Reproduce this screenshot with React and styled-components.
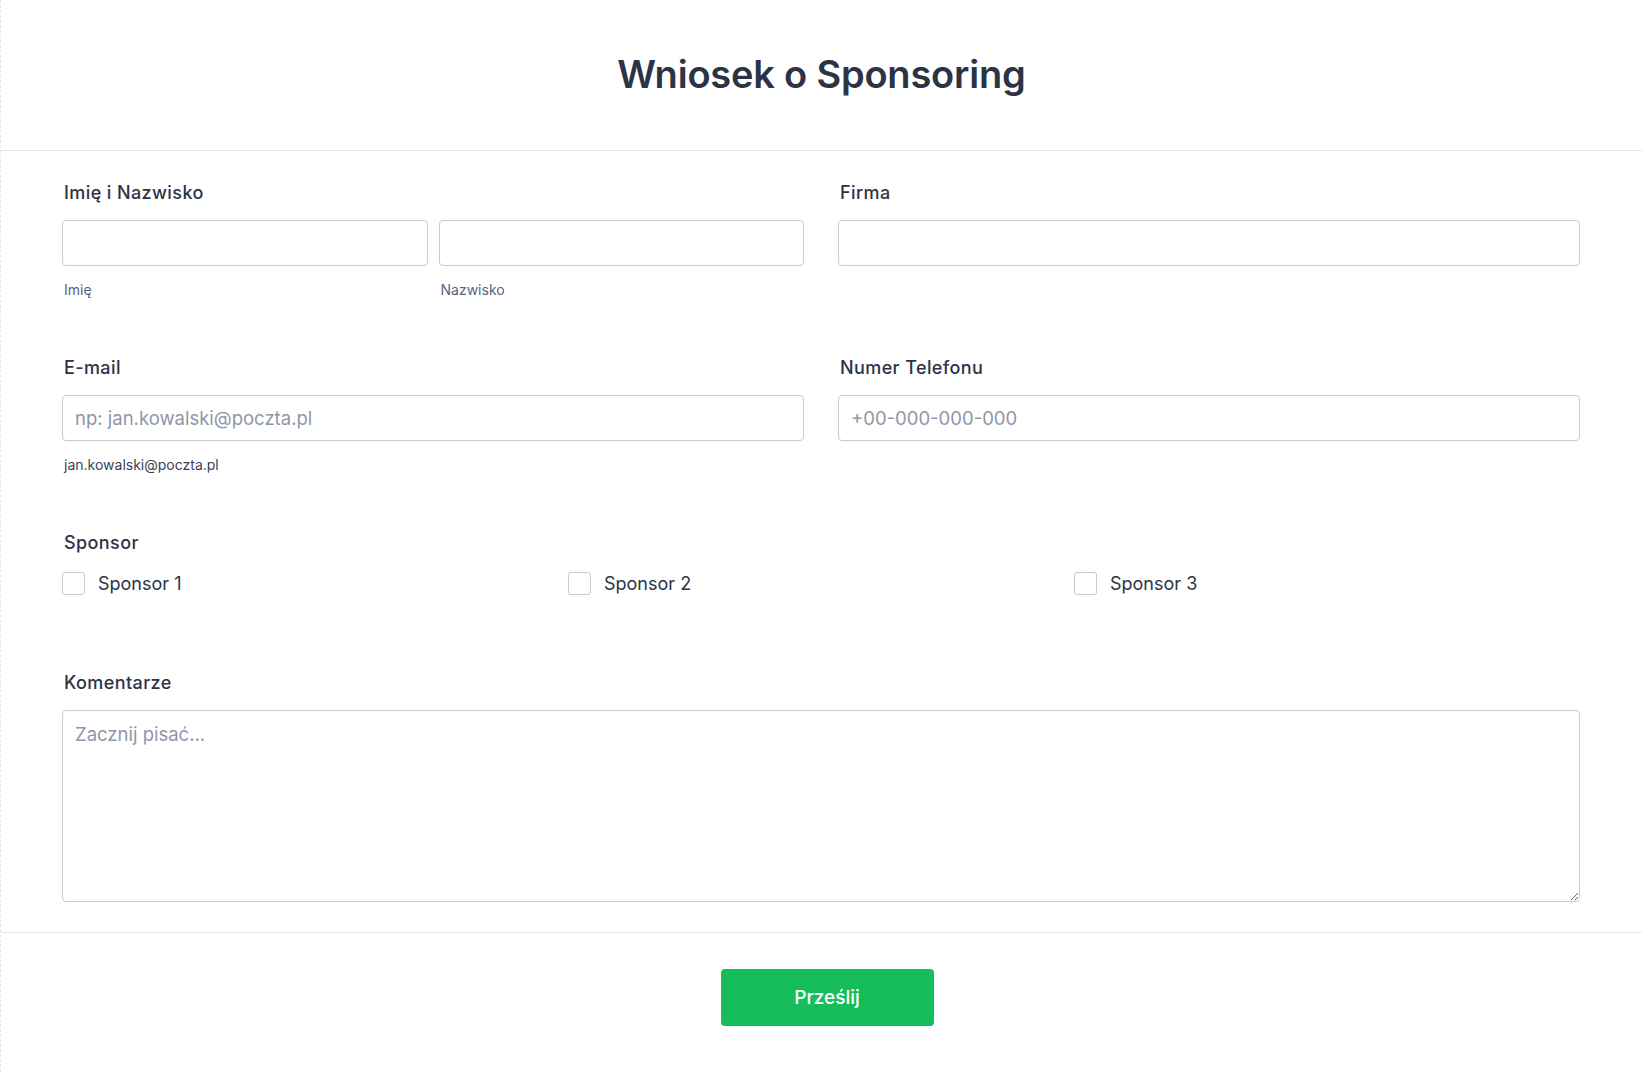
import styled, { createGlobalStyle } from "styled-components";

const GlobalStyle = createGlobalStyle`
    * { box-sizing: border-box; }
    body {
        margin: 0;
        background: #ffffff;
        font-family: Inter, "Noto Sans", sans-serif;
        color: #2c3345;
    }
`

export default function App() {
    const sponsors = ['Sponsor 1', 'Sponsor 2', 'Sponsor 3']
    return (
        <>
            <GlobalStyle />
            <Page>
                <Header>
                    <h1>Wniosek o Sponsoring</h1>
                </Header>
                <Form>
                    <Row>
                        <Field>
                            <Label>Imię i Nazwisko</Label>
                            <Pair>
                                <div>
                                    <Input type="text" />
                                    <Sub>Imię</Sub>
                                </div>
                                <div>
                                    <Input type="text" />
                                    <Sub>Nazwisko</Sub>
                                </div>
                            </Pair>
                        </Field>
                        <Field>
                            <Label>Firma</Label>
                            <Input type="text" />
                        </Field>
                    </Row>
                    <Row>
                        <Field>
                            <Label>E-mail</Label>
                            <Input type="email" placeholder="np: jan.kowalski@poczta.pl" />
                            <Sub dark>jan.kowalski@poczta.pl</Sub>
                        </Field>
                        <Field>
                            <Label>Numer Telefonu</Label>
                            <Input type="tel" placeholder="+00-000-000-000" />
                        </Field>
                    </Row>
                    <Section>
                        <Label>Sponsor</Label>
                        <Checks>
                            {sponsors.map((s) => (
                                <Check key={s}>
                                    <Box type="checkbox" />
                                    <span>{s}</span>
                                </Check>
                            ))}
                        </Checks>
                    </Section>
                    <Section last>
                        <Label>Komentarze</Label>
                        <TextArea placeholder="Zacznij pisać..." />
                    </Section>
                </Form>
                <Footer>
                    <Submit type="button">Prześlij</Submit>
                </Footer>
            </Page>
        </>
    )
}

const Page = styled.div`
    min-height: 1072px;
    border-left: 1px dashed #e4e6eb;
`

const Header = styled.header`
    height: 151px;
    display: flex;
    align-items: center;
    justify-content: center;
    border-bottom: 1px solid #e3e5ea;
    h1 {
        margin: 0;
        padding-bottom: 3px;
        font-size: 38px;
        font-weight: 600;
        color: #2c3345;
        letter-spacing: -0.2px;
    }
`

const Form = styled.div`
    padding: 32px 62px 30px 61px;
`

const Row = styled.div`
    display: grid;
    grid-template-columns: 1fr 1fr;
    column-gap: 34px;
    margin-bottom: 60px;
`

const Field = styled.div`
    display: flex;
    flex-direction: column;
`

const Section = styled.div`
    margin-bottom: ${(props) => (props.last ? '0' : '78px')};
`

const Label = styled.div`
    font-size: 18px;
    line-height: 20px;
    font-weight: 500;
    letter-spacing: 0.4px;
    color: #2c3345;
    padding-left: 2px;
    margin-bottom: 17px;
`

const Pair = styled.div`
    display: grid;
    grid-template-columns: 1fr 1fr;
    column-gap: 11px;
`

const Input = styled.input`
    display: block;
    width: 100%;
    height: 46px;
    border: 1px solid #c3cad8;
    border-radius: 4px;
    padding: 0 12px;
    font-family: Inter, "Noto Sans", sans-serif;
    font-size: 18.5px;
    color: #2c3345;
    background: #fff;
    outline: none;
    &::placeholder {
        color: #8f96a8;
    }
`

const Sub = styled.div`
    font-size: 14px;
    line-height: 16px;
    margin-top: 16px;
    padding-left: 2px;
    color: ${(props) => (props.dark ? '#39435a' : '#57647e')};
`

const Checks = styled.div`
    display: grid;
    grid-template-columns: repeat(3, 1fr);
    padding-top: 2px;
`

const Check = styled.label`
    display: flex;
    align-items: center;
    gap: 13px;
    font-size: 18px;
    color: #2c3345;
`

const Box = styled.input`
    appearance: none;
    margin: 0;
    width: 23px;
    height: 23px;
    border: 1px solid #c3cad8;
    border-radius: 3px;
    background: #fff;
`

const TextArea = styled.textarea`
    display: block;
    width: 100%;
    height: 192px;
    border: 1px solid #c3cad8;
    border-radius: 4px;
    padding: 12px;
    font-family: Inter, "Noto Sans", sans-serif;
    font-size: 18.5px;
    color: #2c3345;
    resize: vertical;
    outline: none;
    &::placeholder {
        color: #8f96a8;
    }
`

const Footer = styled.div`
    border-top: 1px solid #e3e5ea;
    display: flex;
    justify-content: center;
    padding: 36px 0 46px 11px;
`

const Submit = styled.button`
    width: 213px;
    height: 57px;
    border: none;
    border-radius: 4px;
    background: #18bd5b;
    color: #fff;
    font-family: Inter, "Noto Sans", sans-serif;
    font-size: 19px;
    font-weight: 500;
    cursor: pointer;
`
